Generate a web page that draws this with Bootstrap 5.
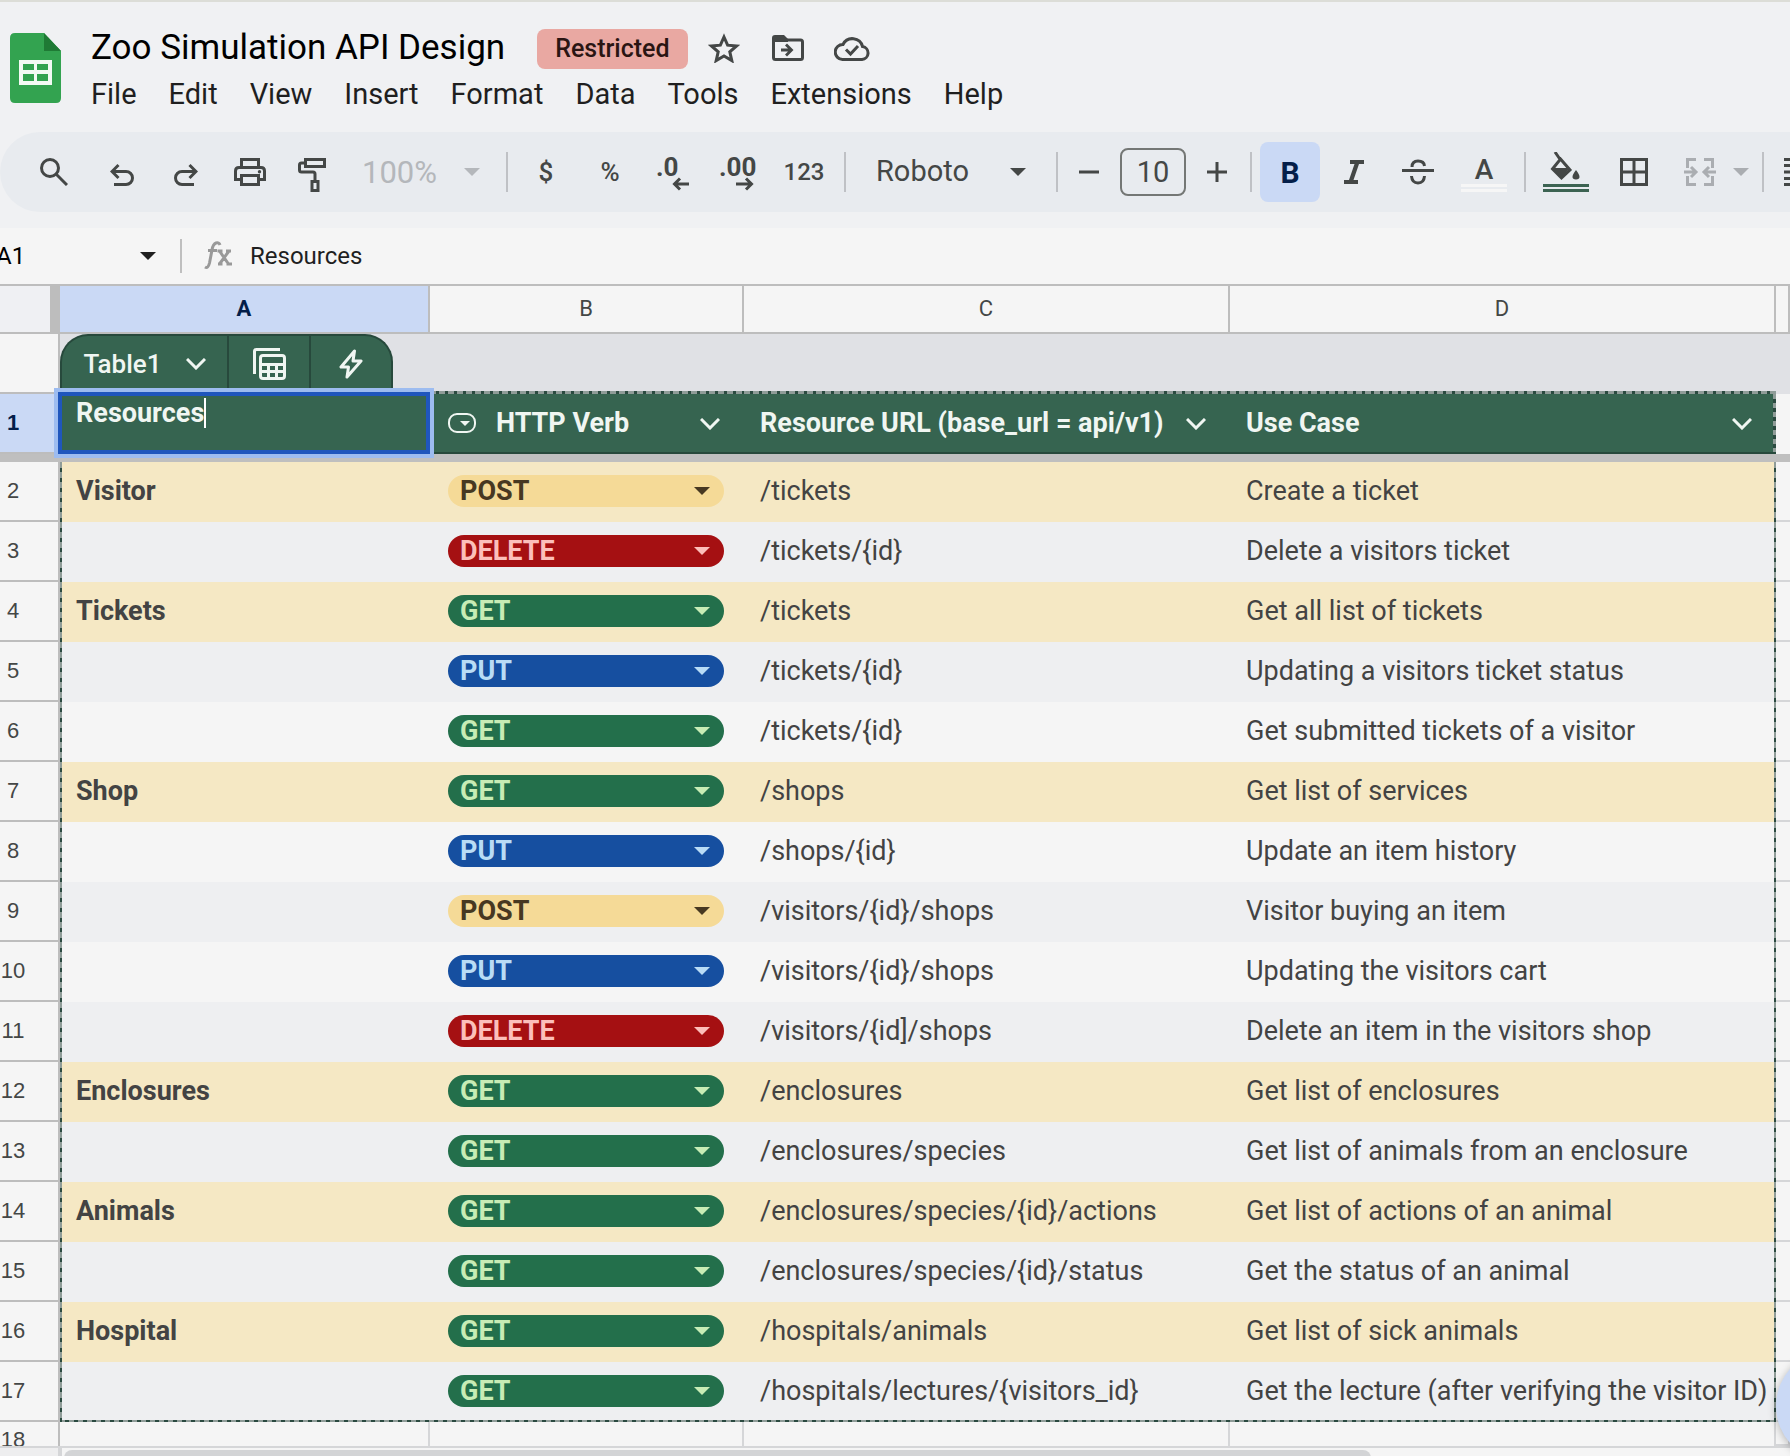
<!DOCTYPE html>
<html lang="en">
<head>
<meta charset="utf-8">
<meta name="viewport" content="width=device-width, initial-scale=1">
<title>Zoo Simulation API Design</title>
<link href="https://cdn.jsdelivr.net/npm/bootstrap@5.3.0/dist/css/bootstrap.min.css" rel="stylesheet">
<style>
  :root { --ink:#444746; --line:#bdbdbd; --soft:#d5d6d8; --green:#366450; --deep:#27493c; --paper:#f5f5f5; --pick:#cad9f5; }
  body { font-family: Roboto, "Liberation Sans", sans-serif; background: #f0f1f3; color: #1f1f1f; overflow-x: hidden; }
  button, input, select { font-family: inherit; color: inherit; }
  svg { display: block; flex: none; }
  .ln { fill: none; stroke: currentColor; stroke-width: 3; }

  .doc-head { border-top: 2px solid #dcddd7; height: 132px; padding: 24px 0 0 10px; }
  .doc-logo { margin-top: 7px; }
  .doc-main { margin-left: 30px; }
  .doc-title { font-size: 35px; line-height: 44px; color: #000; margin: 0; }
  .doc-tag { background: #e9a8a2; color: #2a1513; font-size: 25px; line-height: 40px; font-weight: 500; padding: 0 18px; border-radius: 8px; margin: 2px 18px 0 32px; }
  .doc-act { border: 0; background: none; padding: 0; width: 64px; display: flex; justify-content: center; color: var(--ink); }
  .doc-act:first-of-type { width: 36px; margin-right: 14px; }
  .menu-row { gap: 32px; margin-top: 2px; }
  .menu-row a { color: #1f1f1f; font-size: 29px; line-height: 44px; text-decoration: none; }

  .tool-row { height: 80px; background: #e8ebef; padding-left: 20px; gap: 4px; color: var(--ink); margin-bottom: 16px; overflow: hidden; }
  .tool { flex: none; width: 60px; height: 60px; border: 0; padding: 0; background: none; border-radius: 8px; display: flex; align-items: center; justify-content: center; font-size: 26px; font-weight: 500; }
  .tool.wide { width: 64px; }
  .tool.first { width: 68px; }
  .tool.on { background: var(--pick); color: #041e49; font-size: 30px; font-weight: 700; }
  .tool-rule { flex: none; width: 2px; height: 40px; background: #bfc1c5; margin: 0 4px; }
  .pick { position: relative; flex: none; }
  .pick select { appearance: none; border: 0; background: none; width: 100%; height: 60px; font-size: 29px; opacity: 1; }
  .pick::after, .tri::after { content: ""; border: 8px solid transparent; border-top-color: currentColor; border-bottom: 0; }
  .pick::after { position: absolute; right: 18px; top: 26px; pointer-events: none; }
  .pick-zoom { width: 150px; color: #b4b7bb; }
  .pick-zoom select { padding: 2px 0 0 14px; font-size: 31px; }
  .pick-font { width: 194px; }
  .pick-font select { padding-left: 22px; }
  .pick-font::after { right: 22px; }
  .step { width: 176px; flex: none; gap: 8px; }
  .step .tool { width: 46px; }
  .step input { width: 66px; height: 48px; border: 2px solid #747775; border-radius: 8px; background: none; text-align: center; font-size: 29px; padding: 0; }
  .tool.merge { width: 84px; color: #aaadb1; gap: 17px; padding-left: 8px; }

  .fx-row { background: var(--paper); height: 58px; border-bottom: 2px solid var(--line); overflow: hidden; }
  .fx-row input { border: 0; background: none; padding: 0; color: #000; font-size: 24px; height: 50px; min-width: 0; }
  .fx-row .cell-name { width: 144px; margin-left: -4px; font-size: 24px; }
  .fx-rule { width: 2px; height: 34px; background: #bfbfbf; margin: 0 22px 0 24px; }
  .fx-row .cell-text { flex: 1; margin-left: 18px; color: #1f1f1f; }

  .sheet { table-layout: fixed; width: 100%; margin: 0; border-collapse: separate; border-spacing: 0; color: #434343; background: var(--paper); --bs-table-bg: transparent; }
  .sheet > :not(caption) > * > * { height: 60px; padding: 0 16px 2px; border: 0; font-size: 27px; line-height: 32px; vertical-align: middle; white-space: nowrap; color: inherit; box-shadow: none; }
  .sheet .w-num { width: 60px; } .sheet .w-a { width: 370px; } .sheet .w-b { width: 314px; } .sheet .w-c { width: 486px; } .sheet .w-d { width: 546px; }
  .sheet tr > .num { border-right: 2px solid var(--line); border-bottom: 2px solid var(--line); padding: 0 32px 0 0; text-align: center; font-size: 22px; font-weight: 400; font-family: "Liberation Sans", Arial, sans-serif; background: var(--paper); color: #444746; overflow: hidden; }
  .sheet .letters > * { height: 48px; padding: 0; text-align: center; font-size: 22px; font-weight: 400; line-height: 28px; color: var(--ink); border-right: 2px solid var(--line); border-bottom: 2px solid var(--line); background: var(--paper); }
  .sheet .letters > .corner { background: #eff0f3; box-shadow: inset -8px 0 #bdbdbd; }
  .sheet .letters > .chosen { background: var(--pick); color: #041e49; font-weight: 700; }
  .sheet .band > td { background: #e0e1e5; padding: 0; vertical-align: top; }
  .sheet .band > .edge { background: repeating-linear-gradient(90deg, #8f9c98 0 6px, #2b4a40 6px 9px) 0 100% / 100% 3px no-repeat #e0e1e5; }
  .tab { width: 333px; height: 58px; margin-right: auto; background: var(--green); border: 2px solid var(--deep); border-bottom: 0; border-radius: 28px 28px 0 0; color: #f0f6f2; overflow: hidden; }
  .tab button { border: 0; background: none; padding: 0; height: 56px; color: inherit; display: flex; align-items: center; justify-content: center; flex: 1; font-size: 26px; font-weight: 500; }
  .tab button + button { border-left: 2px solid var(--deep); }
  .tab .tab-name { flex: 0 0 165px; gap: 24px; }
  .sheet .heads > .num { background: var(--pick); color: #041e49; font-weight: 700; }
  .sheet .heads > .hd { background: var(--green); color: #f0f6f2; font-weight: 700; border-bottom: 2px solid var(--deep); padding-bottom: 0; }
  .sheet .heads > .hd:nth-child(5) { background: repeating-linear-gradient(#8f9c98 0 5px, #2b4a40 5px 9px) 100% 0 / 3px 100% no-repeat var(--green); }
  .hd-btn { border: 0; background: none; padding: 0; width: 20px; margin-right: 8px; }
  .hd svg { margin-top: 2px; }
  .hd .hd-kind { margin: 0 20px 0 2px; }
  .editor { position: absolute; left: -2px; right: 0; top: -2px; bottom: -2px; border: 4px solid #1f56bd; box-shadow: 0 0 0 4px #9dbcf0; background: var(--green); z-index: 2; }
  .editor input { width: 100%; border: 0; background: none; padding: 0 0 0 14px; height: 34px; font-weight: 700; color: #f0f6f2; font-size: 27px; outline: 0; }
  .editor span { position: absolute; left: 142px; top: 2px; width: 2px; height: 30px; background: #fff; }
  .sheet .freeze > td { height: 8px; padding: 0; background: #bfbfbf; font-size: 0; line-height: 0; }
  .sheet tbody > tr > td:nth-child(6) { border-bottom: 2px solid var(--soft); padding: 0; }
  .sheet .tan { background: #f5e8c4; }
  .sheet .gray { background: #eeeff1; }
  .sheet tbody > .rec > td:nth-child(2) { font-weight: 700; background: repeating-linear-gradient(#8f9c98 0 6px, #2b4a40 6px 10px) 0 0 / 2px 100% no-repeat; }
  .sheet tbody > .rec > td:nth-child(5) { background: repeating-linear-gradient(#8f9c98 0 6px, #2b4a40 6px 10px) 100% 0 / 2px 100% no-repeat; }
  .sheet .rec:nth-last-child(2) { background: repeating-linear-gradient(90deg, #8f9c98 0 5px, #2b4a40 5px 9px) 60px 100% / 1716px 2px no-repeat #eeeff1; }
  .sheet .rec > td:nth-child(6) { background: var(--paper); }
  .verb { position: relative; height: 32px; width: 276px; border-radius: 16px; margin-left: 2px; }
  .verb::after { content: ""; position: absolute; right: 14px; top: 12px; border: 8px solid transparent; border-top-color: currentColor; border-bottom: 0; pointer-events: none; }
  .verb select { appearance: none; border: 0; background: none; width: 100%; height: 32px; line-height: 32px; font-size: 27px; font-weight: 700; padding: 0 0 0 12px; display: block; }
  .v-post { background: #f5da97; color: #473821; }
  .v-delete { background: #a51012; color: #fcbfba; }
  .v-get { background: #236f4b; color: #c8ecb5; }
  .v-put { background: #164fa0; color: #b9dcf5; }
  .sheet .tail > * { height: 24px; padding: 0; }
  .sheet .tail > td { border-right: 2px solid var(--soft); }
  .sheet .tail > .num { border-bottom: 0; }
  .clip { height: 24px; overflow: hidden; line-height: 36px; }
  .foot { height: 10px; border-top: 2px solid var(--soft); background: var(--paper); overflow: hidden; }
  .foot-lead { width: 62px; background: #eeeeef; border-right: 4px solid var(--soft); margin-right: 2px; }
  .foot-bar { width: 73%; height: 16px; margin-top: 2px; border-radius: 8px; background: #d3d4d6; }
  .fab { position: absolute; right: -98px; bottom: -6px; width: 112px; height: 112px; border: 0; border-radius: 50%; background: var(--pick); box-shadow: 0 2px 8px #0004; }
  .stage { overflow: hidden; }
</style>
<script src="https://cdn.jsdelivr.net/npm/bootstrap@5.3.0/dist/js/bootstrap.bundle.min.js"></script>
</head>
<body>
<header class="doc-head d-flex align-items-start">
  <svg class="doc-logo" width="51" height="70" viewBox="0 0 51 70"><path fill="#33a350" d="M5 0h29l17 18v47q0 5-5 5H5q-5 0-5-5V5q0-5 5-5z"/><path fill="#1f7a35" d="M34 0l17 18H34z"/><path fill="#f3faf4" fill-rule="evenodd" d="M9 27h33v25H9zM13 31v6h11v-6zM27 31v6h11v-6zM13 41v7h11v-7zM27 41v7h11v-7z"/></svg>
  <div class="doc-main">
    <div class="d-flex align-items-center">
      <h1 class="doc-title fw-normal">Zoo Simulation API Design</h1>
      <span class="doc-tag">Restricted</span>
      <button class="doc-act" aria-label="Star"><svg width="32" height="30" viewBox="0 0 32 30"><path class="ln" d="M16 4l3.600 8.200 8.900.8-6.700 5.900 2 8.700L16 23l-7.800 4.600 2-8.700L3.500 13l8.900-.8z"/></svg></button>
      <button class="doc-act" aria-label="Move"><svg width="32" height="26" viewBox="0 0 32 26"><path class="ln" d="M1.500 4v18.500q0 2 2 2h25q2 0 2-2V7q0-2-2-2H14"/><path fill="currentColor" d="M0 6V3q0-3 3-3h9l4 4v3H0zM15 8.500l6.500 6.500-6.500 6.500-2-2 3-3H9v-3h7l-3-3z"/></svg></button>
      <button class="doc-act" aria-label="Document status"><svg width="36" height="26" viewBox="0 0 36 26"><path class="ln" d="M8.500 24.500H28a6.500 6.500 0 0 0 .6-12.900A10.500 10.500 0 0 0 9 9.500a7.500 7.500 0 0 0-.5 15z"/><path class="ln" d="M12 14.500l4.500 4.500 7.500-8"/></svg></button>
    </div>
    <nav class="menu-row d-flex" aria-label="Menu">
      <a href="#">File</a><a href="#">Edit</a><a href="#">View</a><a href="#">Insert</a><a href="#">Format</a><a href="#">Data</a><a href="#">Tools</a><a href="#">Extensions</a><a href="#">Help</a>
    </nav>
  </div>
</header>

<div class="tool-row d-flex align-items-center rounded-start-pill" role="toolbar" aria-label="Formatting">
  <button class="tool first" aria-label="Search"><svg width="28" height="28" viewBox="0 0 28 28"><circle class="ln" cx="10" cy="10" r="8.500"/><path class="ln" d="M16 16l11 11"/></svg></button>
  <button class="tool" aria-label="Undo"><svg width="24" height="28" viewBox="0 -6 24 28"><path class="ln" d="M8.500 1L2 7.500 8.500 14M2 7.500h14a6.500 6.500 0 0 1 0 13H4"/></svg></button>
  <button class="tool" aria-label="Redo"><svg width="24" height="28" viewBox="0 -6 24 28"><path class="ln" d="M15.500 1L22 7.500 15.500 14M22 7.500H8a6.500 6.500 0 0 0 0 13h12"/></svg></button>
  <button class="tool" aria-label="Print"><svg width="32" height="30" viewBox="0 -1 32 30"><path class="ln" d="M7.500 9V1.500h17V9M7.500 21.500h-6V13q0-3.500 3.500-3.500h22q3.500 0 3.500 3.500v8.500h-6M7.500 17.500h17v9h-17z"/><circle cx="25.500" cy="13.800" r="1.700" fill="currentColor"/></svg></button>
  <button class="tool" aria-label="Paint format"><svg width="32" height="40" viewBox="0 -6 32 40"><path class="ln" d="M7.500 1.500h19v7h-19zM7 5H3.500q-2 0-2 2v5q0 2 2 2H15q2 0 2 2v7M14 23.500h6v9h-6z"/></svg></button>
  <div class="pick pick-zoom"><select aria-label="Zoom"><option>100%</option></select></div>
  <span class="tool-rule"></span>
  <button class="tool">$</button>
  <button class="tool">%</button>
  <button class="tool" aria-label="Decrease decimal places"><svg width="36" height="40" viewBox="0 -6 36 40"><text x="0" y="18" font-size="26" font-weight="700" fill="currentColor">.0</text><path class="ln" d="M33 26H19M24 20.500L18.500 26l5.500 5.500"/></svg></button>
  <button class="tool" aria-label="Increase decimal places"><svg width="38" height="40" viewBox="0 -6 38 40"><text x="0" y="18" font-size="26" font-weight="700" fill="currentColor">.00</text><path class="ln" d="M17 26h14M27 20.500l5.500 5.500-5.500 5.500"/></svg></button>
  <button class="tool wide fs-4">123</button>
  <span class="tool-rule"></span>
  <div class="pick pick-font"><select aria-label="Font"><option>Roboto</option></select></div>
  <span class="tool-rule"></span>
  <div class="step d-flex align-items-center">
    <button class="tool" aria-label="Decrease font size"><svg width="20" height="20" viewBox="0 0 20 20"><path class="ln" d="M0 10h20"/></svg></button>
    <input type="text" value="10" aria-label="Font size">
    <button class="tool" aria-label="Increase font size"><svg width="20" height="20" viewBox="0 0 20 20"><path class="ln" d="M0 10h20M10 0v20"/></svg></button>
  </div>
  <span class="tool-rule"></span>
  <button class="tool on" aria-pressed="true">B</button>
  <button class="tool" aria-label="Italic"><svg width="20" height="24" viewBox="0 0 20 24"><path d="M6 0h14v4h-5L9.500 20H14v4H0v-4h5l5.500-16H6z" fill="currentColor"/></svg></button>
  <button class="tool" aria-label="Strikethrough"><svg width="32" height="26" viewBox="0 0 32 26"><path class="ln" d="M0 11.500h32M10 8q0-6 6-6t6.500 5M9.500 17q.5 7 6.500 7t6.500-7"/></svg></button>
  <button class="tool wide" aria-label="Text color"><svg width="46" height="40" viewBox="0 -6 46 40"><text x="23" y="21" text-anchor="middle" font-size="28" fill="currentColor">A</text><path d="M0 26h46v3H0zM0 31h46v3H0z" fill="#f6f6f6"/></svg></button>
  <span class="tool-rule"></span>
  <button class="tool wide" aria-label="Fill color"><svg width="46" height="40" viewBox="0 0 46 40"><path class="ln" d="M12 0l5.500 8M17.500 7L27 18l-8.500 8L9.500 17z"/><path d="M9 16h18l-8.500 10zM33 18q-7 9 0 9.500 7-.5 0-9.500z" fill="currentColor"/><path d="M0 32h46v3H0zM0 37h46v3H0z" fill="#3c6352"/></svg></button>
  <button class="tool wide" aria-label="Borders"><svg width="28" height="28" viewBox="0 0 28 28"><path class="ln" d="M1.500 1.500h25v25h-25zM14 0v28M0 14h28"/></svg></button>
  <button class="tool merge tri" aria-label="Merge cells"><svg width="32" height="28" viewBox="0 0 32 28"><path class="ln" d="M12 1.500H3.500V10M20 1.500h8.500V10M12 26.500H3.500V18M20 26.500h8.500V18M0 14h11M7 9l5 5-5 5M32 14H21M25 9l-5 5 5 5"/></svg></button>
  <span class="tool-rule"></span>
  <button class="tool" aria-label="Align"><svg width="36" height="28" viewBox="0 0 36 28"><path class="ln" d="M0 1.500h36M0 7.500h24M0 14h36M0 20.500h24M0 26.500h36"/></svg></button>
</div>

<div class="fx-row d-flex align-items-center">
  <input class="cell-name" type="text" value="A1" aria-label="Name box">
  <span class="tri d-flex"></span>
  <span class="fx-rule"></span>
  <svg width="28" height="30" viewBox="0 0 28 30"><path d="M16 4q-1-3-4-2t-4 7L5.500 22Q4 28 1 26M4 9.500h9M13.500 10h5M14 23h4.500M15.500 10l9 13M25 10l-9.500 13M22 10h5M22.500 23H28" fill="none" stroke="#999" stroke-width="3"/></svg>
  <input class="cell-text" type="text" value="Resources" aria-label="Formula">
</div>

<main class="stage position-relative">
<table class="table sheet">
  <colgroup><col class="w-num"><col class="w-a"><col class="w-b"><col class="w-c"><col class="w-d"><col></colgroup>
  <thead>
    <tr class="letters"><th class="corner"></th><th class="chosen">A</th><th>B</th><th>C</th><th>D</th><th></th></tr>
    <tr class="band"><th class="num"></th>
      <td><div class="tab d-flex">
        <button class="tab-name">Table1 <svg width="20" height="12" viewBox="0 0 20 12"><path class="ln" d="M1 1l9 9 9-9"/></svg></button>
        <button aria-label="Table view"><svg width="33" height="32" viewBox="0 0 33 32"><path class="ln" d="M1.500 26V3.500q0-2 2-2H27M7.500 10q0-2.500 2.500-2.500h19q2.500 0 2.500 2.500v18q0 2.500-2.500 2.500H10q-2.500 0-2.500-2.500zM8 16.500h23M8 23.500h23M15.500 16v14M23.500 16v14"/></svg></button>
        <button aria-label="Table actions"><svg width="24" height="30" viewBox="0 0 24 30"><path class="ln" stroke-linejoin="round" d="M15.500 2L2 18h7.500L8 28l14-16h-8z"/></svg></button>
      </div></td><td class="edge"></td><td class="edge"></td><td class="edge"></td><td></td></tr>
    <tr class="heads"><th class="num">1</th>
      <td class="hd position-relative"><div class="editor"><input type="text" value="Resources" aria-label="Cell A1"><span></span></div></td>
      <th class="hd"><div class="d-flex align-items-center"><svg class="hd-kind" width="28" height="20" viewBox="0 0 28 20"><rect x="1" y="1" width="26" height="18" rx="8" fill="none" stroke="currentColor" stroke-width="2"/><path d="M12 8h10l-5 5z" fill="currentColor"/></svg><span>HTTP Verb</span><button class="hd-btn ms-auto" aria-label="HTTP Verb options"><svg width="20" height="12" viewBox="0 0 20 12"><path class="ln" d="M1 1l9 9 9-9"/></svg></button></div></th>
      <th class="hd"><div class="d-flex align-items-center">Resource URL (base_url = api/v1)<button class="hd-btn ms-auto" aria-label="Resource URL options"><svg width="20" height="12" viewBox="0 0 20 12"><path class="ln" d="M1 1l9 9 9-9"/></svg></button></div></th>
      <th class="hd"><div class="d-flex align-items-center">Use Case<button class="hd-btn ms-auto" aria-label="Use Case options"><svg width="20" height="12" viewBox="0 0 20 12"><path class="ln" d="M1 1l9 9 9-9"/></svg></button></div></th>
      <td></td></tr>
    <tr class="freeze"><td colspan="6"></td></tr>
  </thead>
  <tbody>
    <tr class="rec tan"><th class="num">2</th><td>Visitor</td><td><div class="verb v-post"><select aria-label="Verb, row 2"><option>POST</option></select></div></td><td>/tickets</td><td>Create a ticket</td><td></td></tr>
    <tr class="rec gray"><th class="num">3</th><td></td><td><div class="verb v-delete"><select aria-label="Verb, row 3"><option>DELETE</option></select></div></td><td>/tickets/{id}</td><td>Delete a visitors ticket</td><td></td></tr>
    <tr class="rec tan"><th class="num">4</th><td>Tickets</td><td><div class="verb v-get"><select aria-label="Verb, row 4"><option>GET</option></select></div></td><td>/tickets</td><td>Get all list of tickets</td><td></td></tr>
    <tr class="rec gray"><th class="num">5</th><td></td><td><div class="verb v-put"><select aria-label="Verb, row 5"><option>PUT</option></select></div></td><td>/tickets/{id}</td><td>Updating a visitors ticket status</td><td></td></tr>
    <tr class="rec"><th class="num">6</th><td></td><td><div class="verb v-get"><select aria-label="Verb, row 6"><option>GET</option></select></div></td><td>/tickets/{id}</td><td>Get submitted tickets of a visitor</td><td></td></tr>
    <tr class="rec tan"><th class="num">7</th><td>Shop</td><td><div class="verb v-get"><select aria-label="Verb, row 7"><option>GET</option></select></div></td><td>/shops</td><td>Get list of services</td><td></td></tr>
    <tr class="rec"><th class="num">8</th><td></td><td><div class="verb v-put"><select aria-label="Verb, row 8"><option>PUT</option></select></div></td><td>/shops/{id}</td><td>Update an item history</td><td></td></tr>
    <tr class="rec gray"><th class="num">9</th><td></td><td><div class="verb v-post"><select aria-label="Verb, row 9"><option>POST</option></select></div></td><td>/visitors/{id}/shops</td><td>Visitor buying an item</td><td></td></tr>
    <tr class="rec"><th class="num">10</th><td></td><td><div class="verb v-put"><select aria-label="Verb, row 10"><option>PUT</option></select></div></td><td>/visitors/{id}/shops</td><td>Updating the visitors cart</td><td></td></tr>
    <tr class="rec gray"><th class="num">11</th><td></td><td><div class="verb v-delete"><select aria-label="Verb, row 11"><option>DELETE</option></select></div></td><td>/visitors/{id]/shops</td><td>Delete an item in the visitors shop</td><td></td></tr>
    <tr class="rec tan"><th class="num">12</th><td>Enclosures</td><td><div class="verb v-get"><select aria-label="Verb, row 12"><option>GET</option></select></div></td><td>/enclosures</td><td>Get list of enclosures</td><td></td></tr>
    <tr class="rec gray"><th class="num">13</th><td></td><td><div class="verb v-get"><select aria-label="Verb, row 13"><option>GET</option></select></div></td><td>/enclosures/species</td><td>Get list of animals from an enclosure</td><td></td></tr>
    <tr class="rec tan"><th class="num">14</th><td>Animals</td><td><div class="verb v-get"><select aria-label="Verb, row 14"><option>GET</option></select></div></td><td>/enclosures/species/{id}/actions</td><td>Get list of actions of an animal</td><td></td></tr>
    <tr class="rec gray"><th class="num">15</th><td></td><td><div class="verb v-get"><select aria-label="Verb, row 15"><option>GET</option></select></div></td><td>/enclosures/species/{id}/status</td><td>Get the status of an animal</td><td></td></tr>
    <tr class="rec tan"><th class="num">16</th><td>Hospital</td><td><div class="verb v-get"><select aria-label="Verb, row 16"><option>GET</option></select></div></td><td>/hospitals/animals</td><td>Get list of sick animals</td><td></td></tr>
    <tr class="rec gray"><th class="num">17</th><td></td><td><div class="verb v-get"><select aria-label="Verb, row 17"><option>GET</option></select></div></td><td>/hospitals/lectures/{visitors_id}</td><td>Get the lecture (after verifying the visitor ID)</td><td></td></tr>
    <tr class="tail"><th class="num"><div class="clip">18</div></th><td></td><td></td><td></td><td></td><td></td></tr>
  </tbody>
</table>
<div class="foot d-flex"><div class="foot-lead"></div><div class="foot-bar"></div></div>
<button class="fab" aria-label="Explore"></button>
</main>
</body>
</html>
